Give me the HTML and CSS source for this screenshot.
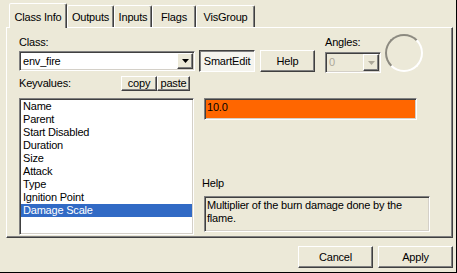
FILE: index.html
```html
<!DOCTYPE html>
<html>
<head>
<meta charset="utf-8">
<link rel="stylesheet" href="styles.css">
</head>
<body>
<div class="dialog">
  <div class="tabs">
    <div class="tab active w-class">Class Info</div>
    <div class="tab w-out">Outputs</div>
    <div class="tab w-in">Inputs</div>
    <div class="tab w-flags">Flags</div>
    <div class="tab w-vis">VisGroup</div>
  </div>
  <div class="panel">
    <div class="toprow">
      <div class="classcol">
        <div class="label">Class:</div>
        <div class="combo">
          <div class="ctext">env_fire</div>
          <div class="drop"><svg width="7" height="4" viewBox="0 0 7 4"><path d="M0 0h7L3.5 4z" fill="#000"/></svg></div>
        </div>
      </div>
      <div class="btn smartedit">SmartEdit</div>
      <div class="btn helpbtn">Help</div>
      <div class="anglecol">
        <div class="label">Angles:</div>
        <div class="combo disabled">
          <div class="ctext">0</div>
          <div class="drop"><svg width="7" height="4" viewBox="0 0 7 4"><path d="M0 0h7L3.5 4z" fill="#ACA899"/></svg></div>
        </div>
      </div>
      <div class="dial"></div>
    </div>
    <div class="kvrow">
      <div class="label kvlabel">Keyvalues:</div>
      <div class="btn small copy">copy</div>
      <div class="btn small paste">paste</div>
    </div>
    <div class="main">
      <div class="list">
        <div class="item">Name</div>
        <div class="item">Parent</div>
        <div class="item">Start Disabled</div>
        <div class="item">Duration</div>
        <div class="item">Size</div>
        <div class="item">Attack</div>
        <div class="item">Type</div>
        <div class="item">Ignition Point</div>
        <div class="item selected">Damage Scale</div>
      </div>
      <div class="right">
        <div class="value">10.0</div>
        <div class="helplabel">Help</div>
        <div class="helpbox">Multiplier of the burn damage done by the flame.</div>
      </div>
    </div>
  </div>
  <div class="footer">
    <div class="btn wide">Cancel</div>
    <div class="btn wide">Apply</div>
  </div>
</div>
</body>
</html>
```
FILE: styles.css
```css
* { box-sizing: border-box; }
html, body { margin: 0; padding: 0; }
body {
  background: #ECE9D8;
  font-family: "Liberation Sans", Arial, sans-serif;
  font-size: 11px;
  line-height: 13px;
  letter-spacing: -0.2px;
  color: #000;
}
.dialog {
  width: 457px;
  height: 273px;
  border-right: 1px solid #000;
  border-bottom: 1px solid #000;
  padding: 3px 3px 0 6px;
  display: flex;
  flex-direction: column;
}
.tabs {
  display: flex;
  align-items: flex-end;
  height: 24px;
  padding-left: 3px;
}
.tab {
  height: 22px;
  border: 1px solid;
  border-bottom: none;
  border-color: #fff #404040 transparent #fff;
  box-shadow: inset -1px 0 #808080;
  border-radius: 2px 2px 0 0;
  text-align: center;
  padding-top: 5px;
  background: #ECE9D8;
}
.tab.active {
  height: 25px;
  margin-bottom: -1px;
  padding-top: 7px;
  position: relative;
  z-index: 1;
}
.w-class { width: 58px; }
.w-out { width: 47px; }
.w-in { width: 38px; }
.w-flags { width: 44px; }
.w-vis { width: 59px; }

.panel {
  width: 447px;
  height: 211px;
  border: 1px solid;
  border-color: #fff #404040 #404040 #fff;
  box-shadow: inset -1px -1px #808080;
  padding: 8px 0 0 12px;
}
.toprow {
  display: flex;
  align-items: flex-start;
}
.label { height: 13px; white-space: nowrap; }
.classcol { width: 176px; }
.combo {
  margin-top: 2px;
  width: 176px;
  height: 20px;
  border: 1px solid;
  border-color: #808080 #fff #fff #808080;
  box-shadow: inset 1px 1px #404040, inset -1px -1px #D4D0C8;
  background: #fff;
  display: flex;
  padding: 1px;
}
.ctext {
  flex: 1;
  padding: 2px 2px 0 2px;
}
.drop {
  width: 16px;
  height: 16px;
  border: 1px solid;
  border-color: #fff #404040 #404040 #fff;
  box-shadow: inset -1px -1px #808080;
  background: #ECE9D8;
  display: flex;
  align-items: center;
  justify-content: center;
}
.combo.disabled {
  width: 56px;
  height: 21px;
  margin-top: 3px;
  background: #ECE9D8;
  color: #ACA899;
}
.combo.disabled .drop { height: 17px; }
.btn {
  border: 1px solid;
  border-color: #fff #404040 #404040 #fff;
  box-shadow: inset -1px -1px #808080;
  background: #ECE9D8;
  display: flex;
  align-items: center;
  justify-content: center;
  height: 22px;
  white-space: nowrap;
}
.smartedit {
  margin: 14px 0 0 4px;
  width: 56px;
  border-color: #404040 #fff #fff #404040;
  box-shadow: inset 1px 1px #808080;
  background: #F5F4EE;
}
.helpbtn {
  margin: 14px 0 0 5px;
  width: 55px;
}
.anglecol {
  margin-left: 10px;
  width: 56px;
}
.dial {
  margin: -2px 0 0 4px;
  width: 38px;
  height: 38px;
  border-radius: 50%;
  border: 2px solid;
  border-color: #8C8A80 #fff #fff #8C8A80;
}
.kvrow {
  display: flex;
  align-items: flex-start;
  width: 171px;
  height: 15px;
  margin-top: 3px;
}
.kvlabel {
  flex: 1;
  margin-top: 1px;
}
.small {
  height: 15px;
  align-items: flex-start;
}
.copy { width: 36px; }
.paste { width: 33px; }
.main {
  display: flex;
  margin-top: 7px;
}
.list {
  width: 175px;
  height: 137px;
  border: 1px solid;
  border-color: #808080 #fff #fff #808080;
  box-shadow: inset 1px 1px #404040, inset -1px -1px #D4D0C8;
  background: #fff;
  padding: 1px;
}
.item {
  height: 13px;
  padding-left: 2px;
  white-space: nowrap;
}
.item.selected {
  background: #316AC5;
  color: #fff;
}
.right {
  margin-left: 10px;
  height: 134px;
  display: flex;
  flex-direction: column;
}
.value {
  width: 213px;
  height: 22px;
  border: 1px solid;
  border-color: #808080 #fff #fff #808080;
  box-shadow: inset 1px 1px #404040, inset -1px -1px #D4D0C8;
  background: #FF6600;
  padding: 2px 2px;
}
.helplabel {
  margin-top: auto;
  margin-left: -2px;
}
.helpbox {
  margin-top: 6px;
  width: 226px;
  height: 36px;
  border: 1px solid;
  border-color: #808080 #fff #fff #808080;
  box-shadow: inset 1px 1px #404040, inset -1px -1px #D4D0C8;
  padding: 2px 2px;
}
.footer {
  display: flex;
  justify-content: flex-end;
  gap: 5px;
  margin-top: 8px;
}
.wide { width: 75px; }
```
